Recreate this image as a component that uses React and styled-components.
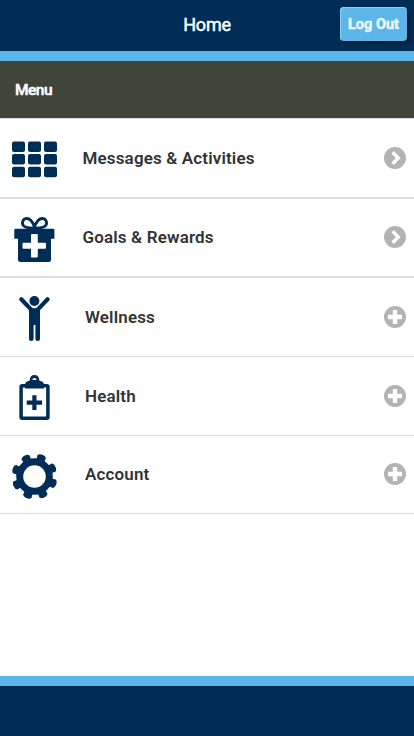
import React from "react";
import styled, { createGlobalStyle } from "styled-components";

const navy = "#002d56";
const sky = "#5db6ea";

const GlobalStyle = createGlobalStyle`
  body {
    margin: 0;
    background-color: white;
    font-family: Roboto, "Liberation Sans", sans-serif;
  }
`;

const Page = styled.div`
  display: flex;
  flex-direction: column;
  height: 736px;
`;

const Header = styled.header`
  display: grid;
  grid-template-columns: 1fr auto 1fr;
  box-sizing: border-box;
  height: 61px;
  padding: 7px 7px 0;
  background-color: ${navy};
  border-bottom: 10px solid ${sky};
`;

const Title = styled.h1`
  grid-column: 2;
  margin: 0;
  font-size: 18px;
  font-weight: 400;
  line-height: 36px;
  letter-spacing: -0.25px;
  -webkit-text-stroke: 0.5px white;
  color: white;
`;

const LogOut = styled.button`
  justify-self: end;
  width: 67px;
  height: 34px;
  padding: 0;
  border: none;
  border-radius: 4px;
  background-color: ${sky};
  box-shadow: 2px 2px 3px rgba(0, 0, 0, 0.6), inset 1px 1px 1px #8dd0f5;
  font-family: inherit;
  font-size: 14.5px;
  font-weight: 700;
  -webkit-text-stroke: 0.5px #edf5fa;
  color: #edf5fa;
  cursor: pointer;
`;

const MenuBar = styled.h2`
  box-sizing: border-box;
  height: 58px;
  margin: 0;
  padding-left: 15px;
  border-bottom: 1px solid #dddddd;
  background-color: #40453a;
  font-size: 15.5px;
  font-weight: 500;
  line-height: 58px;
  letter-spacing: -0.5px;
  -webkit-text-stroke: 0.5px white;
  color: white;
`;

const List = styled.nav`
  flex: 1;
`;

const Row = styled.div`
  display: flex;
  align-items: flex-start;
  box-sizing: border-box;
  height: ${(props) => props.$height}px;
  padding: 18px 8px 0 12px;
  border-bottom: ${(props) => props.$line}px solid #dddddd;
`;

const Icon = styled.svg`
  flex: none;
  width: 45px;
  height: 45px;
  fill: ${navy};
`;

const Label = styled.span`
  flex: 1;
  margin-top: ${(props) => props.$top}px;
  padding-left: ${(props) => props.$indent}px;
  font-size: 17px;
  font-weight: 600;
  line-height: 23px;
  letter-spacing: 0.15px;
  color: #333333;
`;

const Mark = styled.svg`
  width: 22px;
  height: 22px;
  margin-top: ${(props) => props.$top}px;
  fill: none;
  stroke: white;
`;

const Footer = styled.footer`
  height: 50px;
  border-top: 10px solid ${sky};
  background-color: ${navy};
`;

const GridIcon = () => (
  <Icon viewBox="0 0 45 45">
    {[4.5, 17.1, 29.8].map((y) =>
      [0, 16, 32].map((x) => (
        <rect key={`${x}-${y}`} x={x} y={y} width="13" height="10.5" rx="2" />
      ))
    )}
  </Icon>
);

const GiftIcon = () => (
  <Icon viewBox="0 0 45 45">
    <path
      d="M22.4 9.5C21 6 18.5 1.5 14.8 1.5C11 1.5 9.8 5.2 10.8 7.8C11.8 10.3 16 11 21 11.3ZM22.6 9.5C24 6 26.5 1.5 30.2 1.5C34 1.5 35.2 5.2 34.2 7.8C33.2 10.3 29 11 24 11.3Z"
      fill="none"
      stroke={navy}
      strokeWidth="2.9"
      strokeLinejoin="round"
    />
    <path d="M3.3 11.8H41.4Q42.4 11.8 42.4 12.8V21.8H39V42.5Q39 45 36.5 45H8.5Q6 45 6 42.5V21.8H2.3V12.8Q2.3 11.8 3.3 11.8Z" />
    <path
      d="M20 17H24.8Q25.8 17 25.8 18V25.7H33Q34 25.7 34 26.7V30.7Q34 31.7 33 31.7H25.8V39.5Q25.8 40.5 24.8 40.5H20Q19 40.5 19 39.5V31.7H11.5Q10.5 31.7 10.5 30.7V26.7Q10.5 25.7 11.5 25.7H19V18Q19 17 20 17Z"
      fill="white"
    />
  </Icon>
);

const PersonIcon = () => (
  <Icon viewBox="0 0 45 45">
    <circle cx="22.4" cy="5" r="5" />
    <path
      d="M9.3 3.2L19 13.4M35.6 3.2L25.9 13.4"
      fill="none"
      stroke={navy}
      strokeWidth="4.2"
      strokeLinecap="round"
    />
    <path d="M17 11.5Q19 12.3 22.4 12.3Q26 12.3 28 11.5V43Q28 45 25.8 45Q23.4 45 23.4 43V29H21.6V43Q21.6 45 19.2 45Q17 45 17 43Z" />
  </Icon>
);

const ClipboardIcon = () => (
  <Icon viewBox="0 0 45 45">
    <rect
      x="9.1"
      y="10.7"
      width="26.8"
      height="32.5"
      rx="1"
      fill="none"
      stroke={navy}
      strokeWidth="3.5"
    />
    <path d="M13 13.5V10Q13 6 17.6 5.7Q17.8 0 22.5 0Q27.2 0 27.4 5.7Q32 6 32 10V13.5Z" />
    <path d="M20.3 4.9A2.2 2 0 0 1 24.7 4.9Z" fill="white" />
    <path
      d="M22.4 20.2V35M14.7 27.6H30"
      fill="none"
      stroke={navy}
      strokeWidth="4.2"
    />
  </Icon>
);

const GearIcon = () => (
  <Icon viewBox="0 0 45 45">
    <circle cx="22.5" cy="22.5" r="14.8" fill="none" stroke={navy} strokeWidth="7" />
    {[0, 45, 90, 135, 180, 225, 270, 315].map((angle) => (
      <path
        key={angle}
        transform={`rotate(${angle - 25} 22.5 22.5)`}
        d="M37 16L40.2 18.4L43.4 18Q45.4 18.6 45.6 22.5Q45.4 26.4 43.4 27L40.2 26.6L37 29Z"
      />
    ))}
  </Icon>
);

const ArrowMark = ({ top }) => (
  <Mark $top={top} viewBox="0 0 22 22">
    <circle cx="11" cy="11" r="11" fill="#b3b3b3" stroke="none" />
    <path d="M8.7 5.2L14.2 11L8.7 16.8" strokeWidth="3.5" />
  </Mark>
);

const PlusMark = ({ top }) => (
  <Mark $top={top} viewBox="0 0 22 22">
    <circle cx="11" cy="11" r="11" fill="#b3b3b3" stroke="none" />
    <path d="M11 4V18M4 11H18" strokeWidth="4.4" />
  </Mark>
);

const items = [
  { label: "Messages & Activities", icon: GridIcon, mark: ArrowMark, height: 80, line: 2, indent: 25.5, top: 10 },
  { label: "Goals & Rewards", icon: GiftIcon, mark: ArrowMark, height: 79, line: 2, indent: 25.5, top: 9 },
  { label: "Wellness", icon: PersonIcon, mark: PlusMark, height: 79, line: 1, indent: 28, top: 10 },
  { label: "Health", icon: ClipboardIcon, mark: PlusMark, height: 79, line: 1, indent: 28, top: 10 },
  { label: "Account", icon: GearIcon, mark: PlusMark, height: 78, line: 1, indent: 28, top: 9 },
];

const App = () => {
  return (
    <Page>
      <GlobalStyle />
      <Header>
        <Title>Home</Title>
        <LogOut>Log Out</LogOut>
      </Header>
      <MenuBar>Menu</MenuBar>
      <List>
        {items.map(({ label, icon: ItemIcon, mark: ItemMark, height, line, indent, top }) => (
          <Row key={label} $height={height} $line={line}>
            <ItemIcon />
            <Label $indent={indent} $top={top}>
              {label}
            </Label>
            <ItemMark top={top} />
          </Row>
        ))}
      </List>
      <Footer />
    </Page>
  );
};

export default App;
